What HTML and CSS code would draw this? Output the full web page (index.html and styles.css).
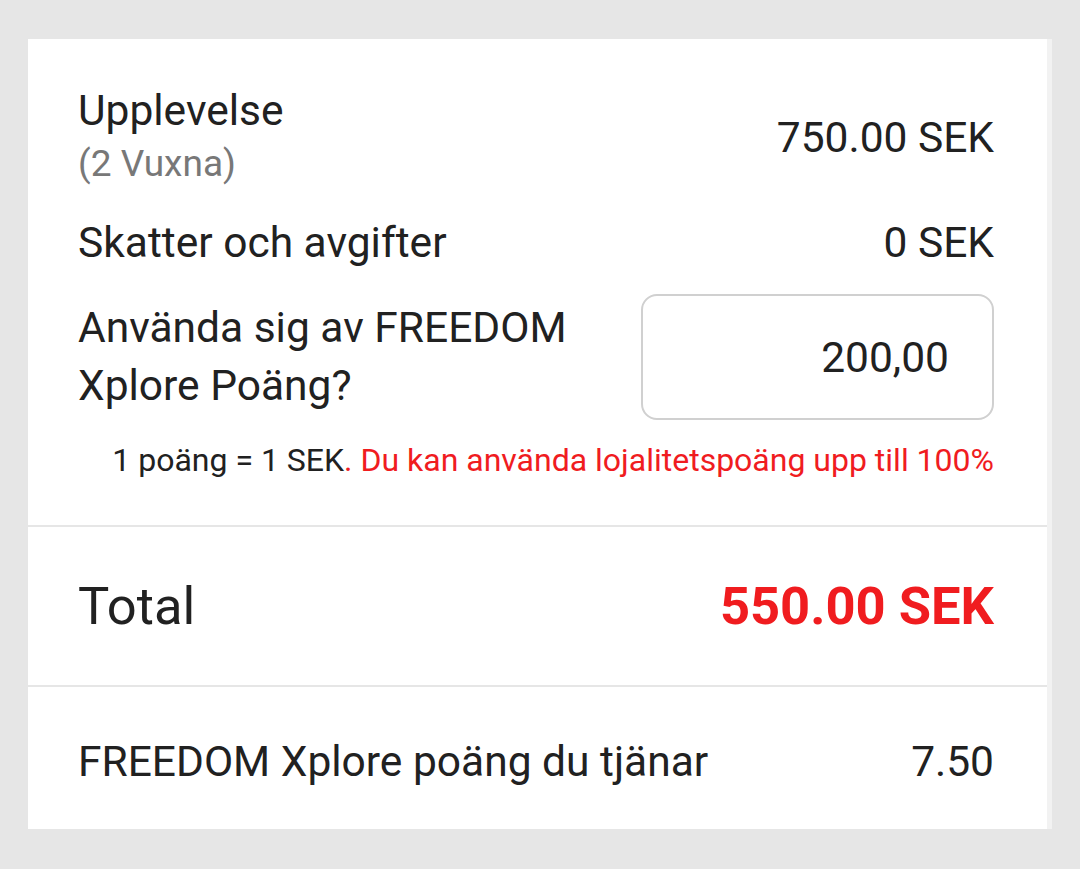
FILE: index.html
```html
<!DOCTYPE html>
<html lang="sv">
<head>
<meta charset="utf-8">
<link rel="stylesheet" href="styles.css">
</head>
<body>
<div class="card">
  <section class="sec sec-top">
    <div class="row row-exp">
      <div class="label">
        <div>Upplevelse</div>
        <div class="sub">(2 Vuxna)</div>
      </div>
      <div class="value">750.00 SEK</div>
    </div>
    <div class="row row-tax">
      <div class="label">Skatter och avgifter</div>
      <div class="value">0 SEK</div>
    </div>
    <div class="row row-points">
      <div class="label label-points">Använda sig av FREEDOM Xplore Poäng?</div>
      <div class="input">200,00</div>
    </div>
    <div class="hint">1 poäng = 1 SEK<span class="red">. Du kan använda lojalitetspoäng upp till 100%</span></div>
  </section>
  <section class="sec sec-total">
    <div class="row">
      <div class="total-label">Total</div>
      <div class="total-value">550.00 SEK</div>
    </div>
  </section>
  <section class="sec sec-earn">
    <div class="row">
      <div class="label">FREEDOM Xplore poäng du tjänar</div>
      <div class="value">7.50</div>
    </div>
  </section>
</div>
</body>
</html>
```
FILE: styles.css
```css
html, body {
  margin: 0;
  padding: 0;
}
body {
  background: #e6e6e6;
  font-family: Roboto, "Noto Sans", Arial, sans-serif;
  color: #212121;
  width: 1080px;
  height: 869px;
  padding: 39px 0 0 28px;
  box-sizing: border-box;
}
.card {
  width: 1019px;
  background: #fff;
  border-right: 5px solid #f2f2f2;
  height: 790px;
  display: flex;
  flex-direction: column;
}
.sec {
  padding: 0 53px 0 50px;
}
.sec-top {
  padding-top: 45px;
  padding-bottom: 45px;
  border-bottom: 2px solid #e6e6e6;
}
.row {
  display: flex;
  justify-content: space-between;
  align-items: center;
}
.label {
  font-size: 42.5px;
  line-height: 53px;
}
.sub {
  color: #787878;
  font-size: 37px;
}
.value {
  font-size: 42.5px;
  line-height: 53px;
}
.row-tax {
  margin-top: 26px;
}
.row-points {
  margin-top: 25px;
}
.label-points {
  width: 540px;
  line-height: 58px;
}
.input {
  box-sizing: border-box;
  width: 353px;
  height: 126px;
  border: 2px solid #d0d0d0;
  border-radius: 16px;
  font-size: 42.5px;
  display: flex;
  align-items: center;
  justify-content: flex-end;
  padding-right: 43px;
}
.hint {
  text-align: right;
  font-size: 32px;
  line-height: 40px;
  margin-top: 20px;
}
.red {
  color: #f01c1f;
}
.sec-total {
  height: 160px;
  box-sizing: border-box;
  display: flex;
  flex-direction: column;
  justify-content: center;
  border-bottom: 2px solid #e6e6e6;
}
.total-label {
  font-size: 52.5px;
}
.total-value {
  font-size: 52.5px;
  font-weight: 700;
  color: #f01c1f;
}
.sec-earn {
  flex: 1;
  display: flex;
  flex-direction: column;
  justify-content: center;
  padding-top: 6px;
}
```
